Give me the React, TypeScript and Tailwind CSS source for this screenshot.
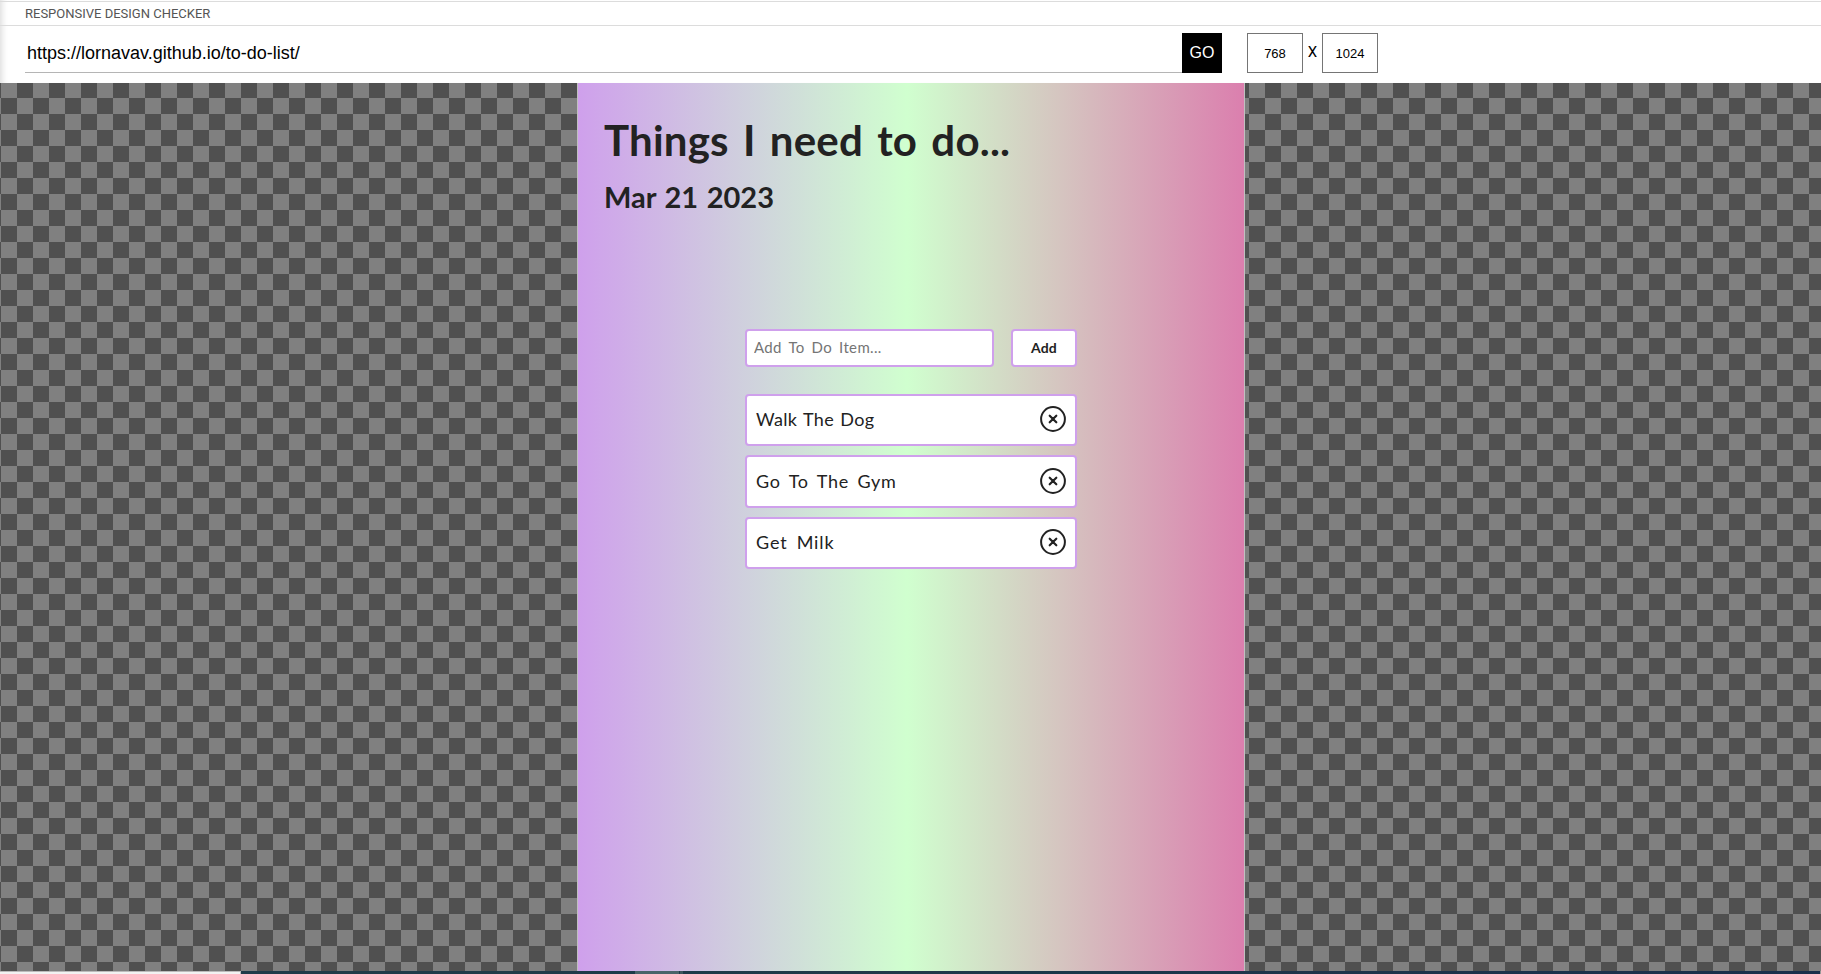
const hand = "font-['Lato',cursive] text-[#222222]";

const todos = [
  { label: "Walk The Dog", text: "tracking-[0.3px] [word-spacing:1.5px]", box: "h-[52px] mt-[27px]" },
  { label: "Go To The Gym", text: "tracking-[0.7px] [word-spacing:3.3px]", box: "h-[53px] mt-[9px]" },
  { label: "Get Milk", text: "tracking-[0.9px] [word-spacing:3.5px]", box: "h-[52px] mt-[9px]" },
];

function DeleteIcon() {
  return (
    <svg width="26" height="26" viewBox="0 0 26 26" fill="none" stroke="#222222">
      <circle cx="13" cy="13" r="11.9" strokeWidth="2" />
      <path d="M9.7 9.7l6.6 6.6M16.3 9.7l-6.6 6.6" strokeWidth="2.2" strokeLinecap="round" />
    </svg>
  );
}

function Toolbar() {
  return (
    <header className="h-[83px] bg-white shadow-[inset_7px_0_6px_-5px_#dcdcdc] font-['Liberation_Sans',sans-serif] text-black">
      <div className="h-px" />
      <div className="flex h-[25px] items-center border-y border-[#dcdcdc] pl-[25px]">
        <span className="font-[Roboto,sans-serif] text-[13px] leading-none text-[#555555]">RESPONSIVE DESIGN CHECKER</span>
      </div>
      <div className="flex pt-[7px]">
        <div className="ml-[25px] flex h-10 w-[1157px] items-center border-b border-[#b5b5b5] pl-[2px]">
          <span className="text-[18px] leading-none">https://lornavav.github.io/to-do-list/</span>
        </div>
        <button className="h-10 w-10 bg-black text-[16px] text-white">GO</button>
        <div className="ml-[25px] flex h-10 w-14 items-center justify-center border border-[#757575] pt-px text-[13px]">768</div>
        <span className="w-[19px] pt-[8px] text-center font-[Roboto,sans-serif] text-[15px]">X</span>
        <div className="flex h-10 w-14 items-center justify-center border border-[#757575] pt-px text-[13px]">1024</div>
      </div>
    </header>
  );
}

function TodoPage() {
  return (
    <main className={`${hand} w-[668px] border-x border-[#c0c0c0] bg-[linear-gradient(to_right,#cfa0ec,#d0ffcf_49.4%,#db7fae)] pl-[26px]`}>
      <h1 className="mt-[32px] h-[50px] whitespace-nowrap text-[42px] font-bold leading-[50px] tracking-[0.2px] [word-spacing:3.8px]">Things I need to do...</h1>
      <h2 className="mt-[14px] h-[36px] whitespace-nowrap text-[29px] font-bold leading-[36px] [word-spacing:1.5px]">Mar 21 2023</h2>
      <div className="ml-[141px] mt-[114px] w-[332px]">
        <div className="flex justify-between">
          <input
            placeholder="Add To Do Item..."
            className="h-[38px] w-[249px] rounded-[4px] border-2 border-[#cfa0ec] bg-white pb-[2px] pl-[7px] text-[15px] tracking-[0.35px] [word-spacing:2.8px] placeholder:text-[#757575]"
          />
          <button className="h-[38px] w-[66px] rounded-[4px] border-2 border-[#cfa0ec] bg-white pb-[2px] text-[14px] font-bold tracking-[0.2px]">Add</button>
        </div>
        <ul>
          {todos.map((t) => (
            <li key={t.label} className={`${t.box} flex items-center justify-between rounded-[4px] border-2 border-[#cfa0ec] bg-white pb-[2px] pl-[9px] pr-[8.6px]`}>
              <span className={`${t.text} text-[18px] leading-none`}>{t.label}</span>
              <DeleteIcon />
            </li>
          ))}
        </ul>
      </div>
    </main>
  );
}

export default function App() {
  return (
    <div className="flex h-[974px] w-[1821px] flex-col overflow-hidden bg-white">
      <Toolbar />
      <div className="flex h-[888px] bg-[repeating-conic-gradient(#505050_0_25%,#808080_0_50%)] bg-[length:32px_32px] bg-[position:1px_-1px] pl-[577px]">
        <TodoPage />
      </div>
      <footer className="flex h-[3px]">
        <div className="w-[240px] border-t border-[#bbbbbb] bg-[#f2f2f2]" />
        <div className="w-px bg-[#bbbbbb]" />
        <div className="w-[394px] bg-[#1f3b48]" />
        <div className="w-[44px] bg-[#4a6468]" />
        <div className="w-px bg-[#1f3b48]" />
        <div className="w-[3px] bg-[#3c555c]" />
        <div className="flex-1 bg-[linear-gradient(to_right,#1f3b48,#1a2f4b)]" />
        <div className="w-px bg-[#9a9a9a]" />
      </footer>
    </div>
  );
}
